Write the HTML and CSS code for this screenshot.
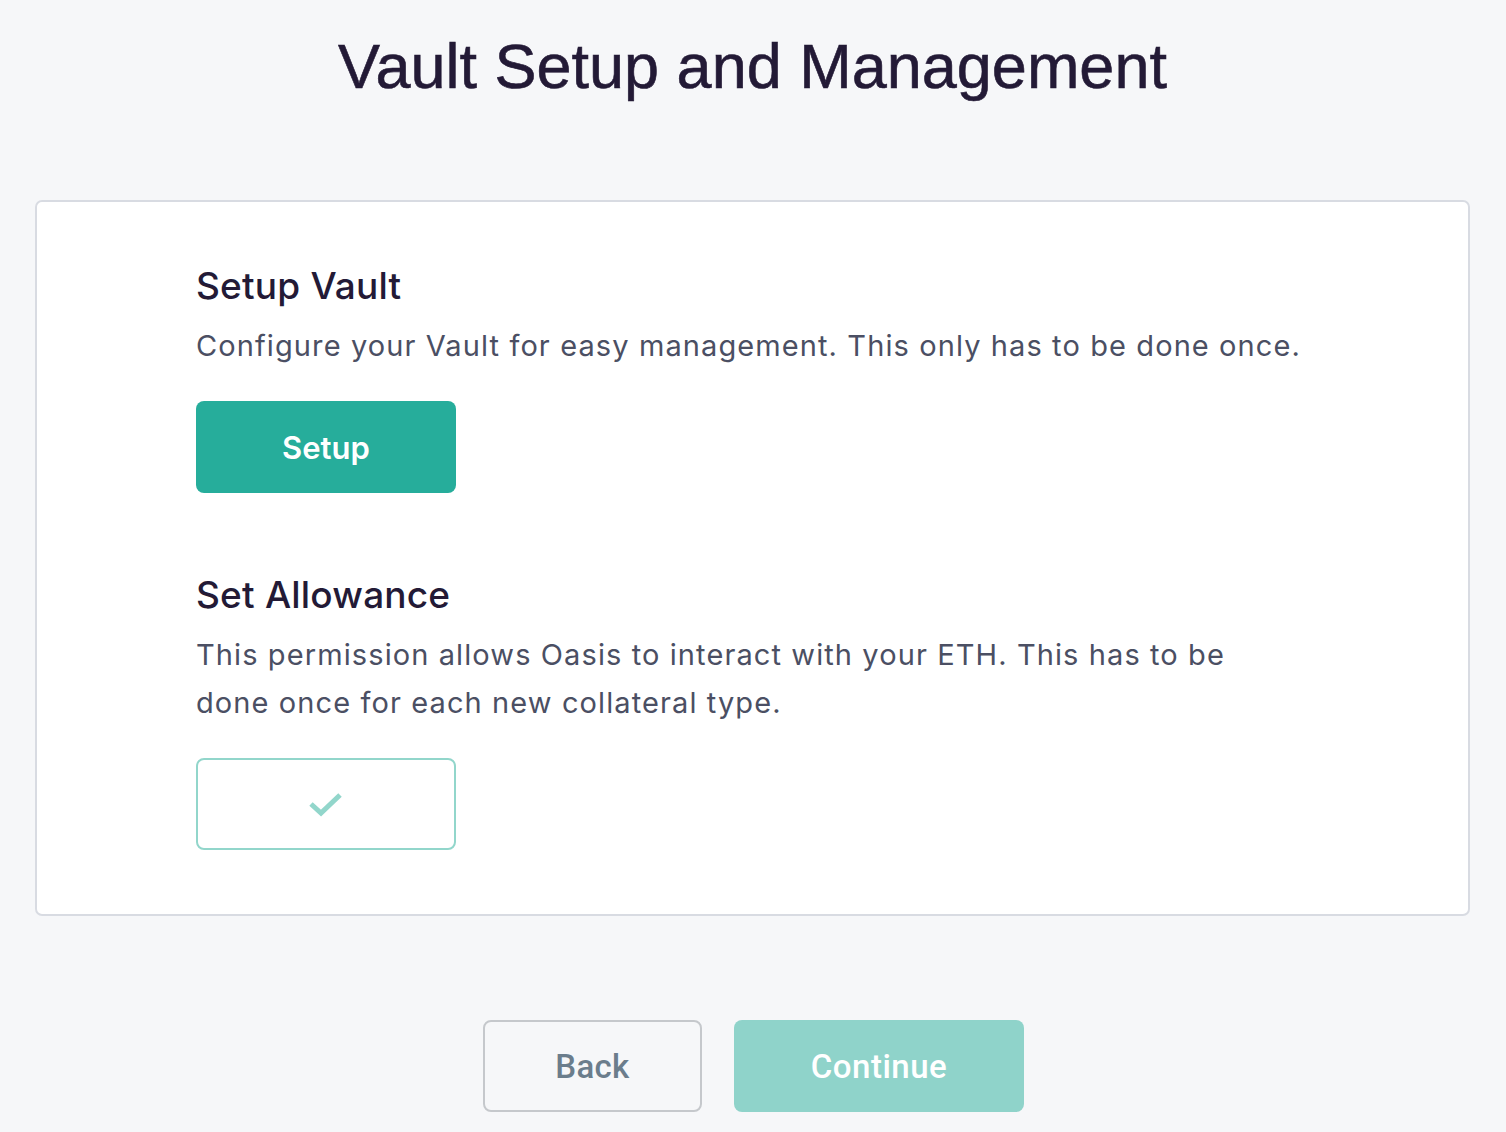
FILE: index.html
```html
<!DOCTYPE html>
<html lang="en">
<head>
<meta charset="utf-8">
<title>Vault Setup and Management</title>
<link rel="stylesheet" href="styles.css">
</head>
<body>
<main class="page">
  <h1 class="title">Vault Setup and Management</h1>
  <section class="card">
    <div class="step">
      <h2 class="step-title">Setup Vault</h2>
      <p class="step-text">Configure your Vault for easy management. This only has to be done once.</p>
      <button class="btn btn-primary">Setup</button>
    </div>
    <div class="step">
      <h2 class="step-title">Set Allowance</h2>
      <p class="step-text">This permission allows Oasis to interact with your ETH. This has to be done once for each new collateral type.</p>
      <button class="btn btn-done" aria-label="Done">
        <svg width="34" height="26" viewBox="0 0 34 26" aria-hidden="true"><path d="M2 13 L12 22 L31 4" fill="none" stroke="#92d6cb" stroke-width="5"/></svg>
      </button>
    </div>
  </section>
  <div class="actions">
    <button class="btn btn-back">Back</button>
    <button class="btn btn-continue">Continue</button>
  </div>
</main>
</body>
</html>
```
FILE: styles.css
```css
html, body {
  margin: 0;
  padding: 0;
  background: #f6f7f9;
}
.page {
  display: flex;
  flex-direction: column;
  align-items: center;
  padding: 0 36px 0 35px;
  box-sizing: border-box;
  width: 1506px;
  height: 1132px;
}
.title {
  margin: 24px 0 0;
  font-family: "Liberation Sans", Arial, sans-serif;
  font-weight: 400;
  font-size: 63px;
  line-height: 84px;
  color: #231a36;
  -webkit-text-stroke: 0.6px #231a36;
}
.card {
  margin-top: 92px;
  align-self: stretch;
  background: #ffffff;
  border: 2px solid #d8dbe2;
  border-radius: 7px;
  padding: 60px 160px 64px 159px;
  display: flex;
  flex-direction: column;
  gap: 78px;
}
.step {
  display: flex;
  flex-direction: column;
  align-items: flex-start;
}
.step-title {
  margin: 0;
  font-family: Inter, "Noto Sans", sans-serif;
  font-weight: 500;
  font-size: 37px;
  letter-spacing: 0.2px;
  line-height: 48px;
  color: #231a36;
}
.step-text {
  margin: 12px 0 0;
  max-width: 1111px;
  font-family: Inter, "Noto Sans", sans-serif;
  font-weight: 400;
  font-size: 29px;
  letter-spacing: 1.1px;
  line-height: 48px;
  color: #4b4f63;
}
.btn {
  box-sizing: border-box;
  height: 92px;
  border-radius: 8px;
  border: 0;
  cursor: pointer;
  display: flex;
  align-items: center;
  justify-content: center;
  padding: 0;
}
.btn-primary {
  margin-top: 31px;
  width: 260px;
  background: #26ad9b;
  color: #ffffff;
  font-family: Inter, "Noto Sans", sans-serif;
  font-weight: 600;
  font-size: 31px;
}
.btn-done {
  margin-top: 31px;
  width: 260px;
  background: #ffffff;
  border: 2px solid #92d6cb;
}
.actions {
  margin-top: 104px;
  margin-left: 2px;
  display: flex;
  gap: 32px;
}
.btn-back {
  width: 219px;
  background: transparent;
  border: 2px solid #c5c8cc;
  color: #6b7d8c;
  font-family: Roboto, sans-serif;
  font-weight: 500;
  font-size: 33px;
  letter-spacing: 0.3px;
}
.btn-continue {
  width: 290px;
  background: #8fd3ca;
  color: #ffffff;
  font-family: Roboto, sans-serif;
  font-weight: 500;
  font-size: 33px;
  letter-spacing: 0.5px;
}
```
